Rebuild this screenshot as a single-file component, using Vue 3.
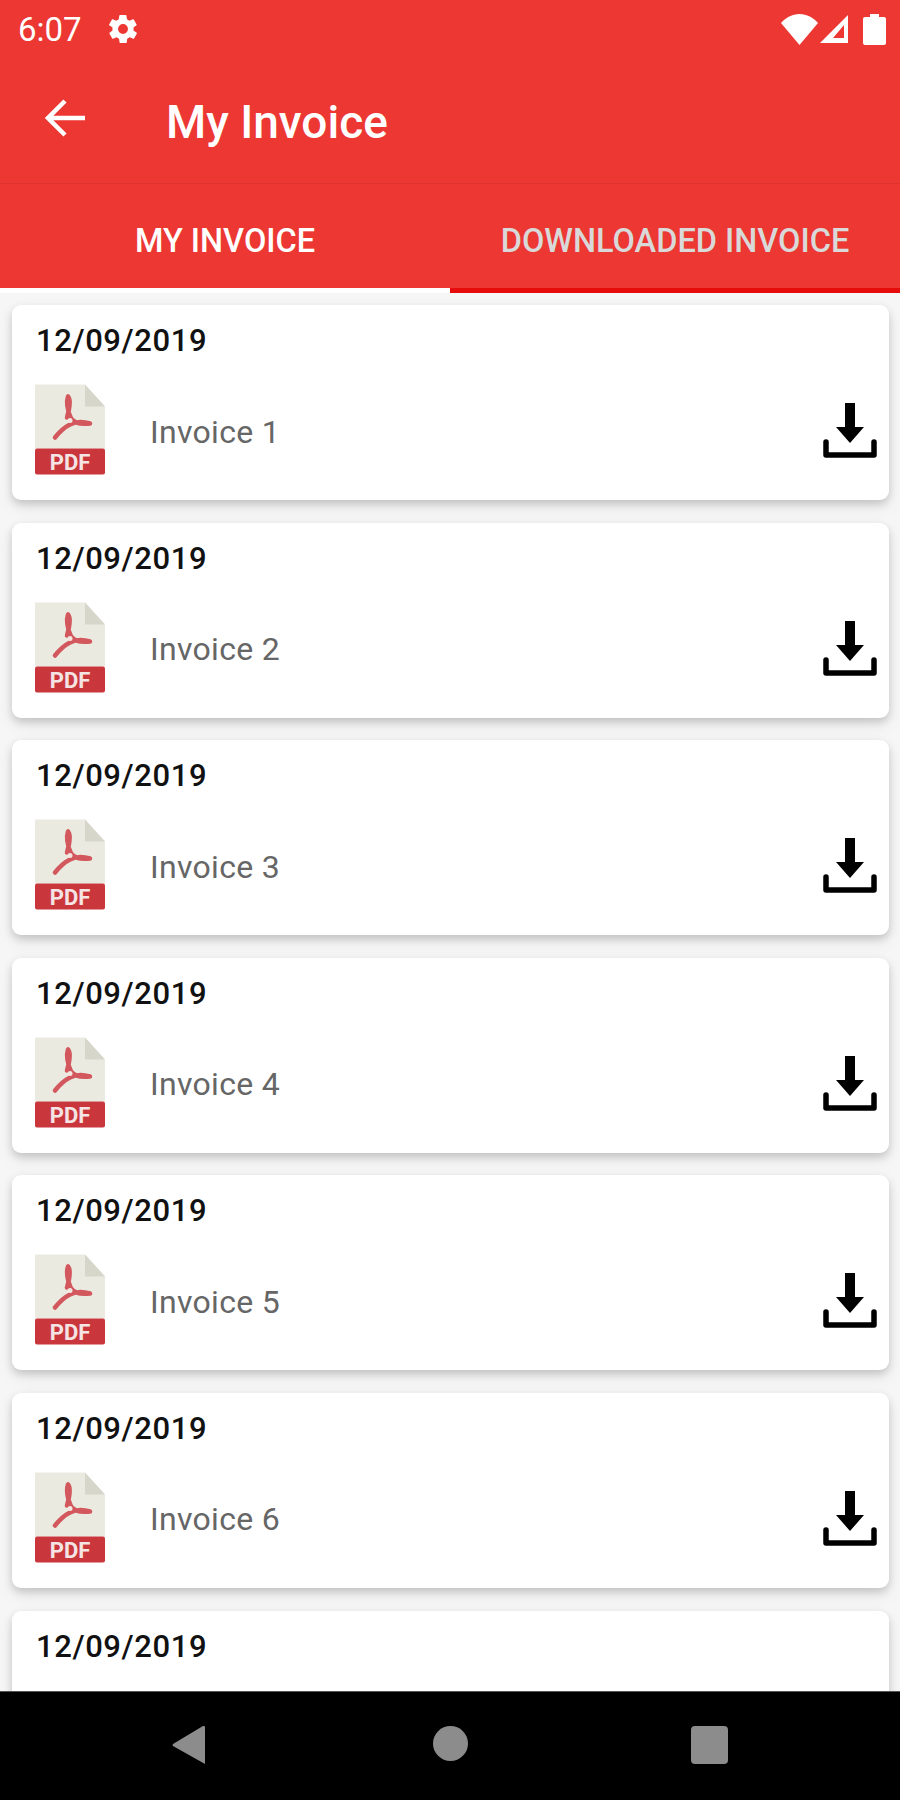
<script setup>
const invoices = [1, 2, 3, 4, 5, 6, 7].map(n => ({ id: n, date: '12/09/2019', name: 'Invoice ' + n }))
// the last card sits under the nav bar, only its date shows
const lastId = invoices.length
</script>

<template>
  <div class="screen">
    <header class="appbar">
      <div class="status">
        <span class="time">6:07</span>
        <svg class="gear" viewBox="0 0 24 24"><path fill="#fff" fill-rule="evenodd" d="M19.4 13a7.5 7.5 0 0 0 0-2l2.100-1.600a.5.5 0 0 0 .1-.6l-2-3.500a.5.5 0 0 0-.6-.2l-2.500 1a7.300 7.300 0 0 0-1.700-1l-.4-2.600a.5.5 0 0 0-.5-.4h-4a.5.5 0 0 0-.5.4l-.4 2.600a7.300 7.300 0 0 0-1.700 1l-2.500-1a.5.5 0 0 0-.6.2l-2 3.500a.5.5 0 0 0 .1.6L4.600 11a7.500 7.500 0 0 0 0 2l-2.100 1.600a.5.5 0 0 0-.1.6l2 3.500a.5.5 0 0 0 .6.2l2.500-1a7.300 7.300 0 0 0 1.700 1l.4 2.600a.5.5 0 0 0 .5.4h4a.5.5 0 0 0 .5-.4l.4-2.600a7.300 7.300 0 0 0 1.700-1l2.500 1a.5.5 0 0 0 .6-.2l2-3.500a.5.5 0 0 0-.1-.6ZM12 15.500a3.500 3.500 0 1 1 0-7 3.500 3.500 0 0 1 0 7Z"/></svg>
        <span class="spacer"></span>
        <svg class="wifi" viewBox="0 0 37 31"><path fill="#fff" d="M18.500 31 0 9C5 3.500 11 0 18.500 0S32 3.500 37 9Z"/></svg>
        <svg class="signal" viewBox="0 0 29 29"><path fill="#fff" fill-rule="evenodd" d="M28 0v28H0ZM24 10 13 23h11Z"/></svg>
        <svg class="battery" viewBox="0 0 23 31"><path fill="#fff" d="M7 0h9v3h5a2 2 0 0 1 2 2v24a2 2 0 0 1-2 2H2a2 2 0 0 1-2-2V5a2 2 0 0 1 2-2h5Z"/></svg>
      </div>
      <div class="toolbar">
        <svg class="back" viewBox="0 0 40 38"><path fill="none" stroke="#fff" stroke-width="4.500" d="M40 19H4M20 2 3 19l17 17"/></svg>
        <h1 class="title">My Invoice</h1>
      </div>
      <nav class="tabs">
        <div class="tab active">MY INVOICE</div>
        <div class="tab">DOWNLOADED INVOICE</div>
      </nav>
    </header>

    <main class="list">
      <article v-for="item in invoices" :key="item.id" class="card">
        <div class="date">{{ item.date }}</div>
        <div v-if="item.id < lastId" class="row">
          <svg class="pdf" viewBox="0 0 70 90">
            <path fill="#ebeae1" d="M0 0h50l20 22v42H0Z"/>
            <path fill="#d6d6ca" d="M50 0l20 22H50Z"/>
            <path fill="none" stroke="#d2585e" stroke-width="4.500" stroke-linecap="round" stroke-linejoin="round" d="M33 12c-2 6 0 15 3 22 4 5 11 6 19 5-7-2-14-2-20 1-6 3-11 8-15 13M33 12c3 3 1 14-1 21"/>
            <circle cx="35" cy="36" r="2.500" fill="#f3e6e0"/>
            <rect y="64" width="70" height="26" rx="2" fill="#c9363c"/>
            <text x="35" y="85" text-anchor="middle" class="pdf-label">PDF</text>
          </svg>
          <span class="name">{{ item.name }}</span>
          <svg class="download" viewBox="0 0 54 55">
            <path fill="#000" d="M22 0h10v24h9L27 40 13 24h9Z"/>
            <path fill="none" stroke="#000" stroke-width="5.500" stroke-linecap="round" stroke-linejoin="round" d="M3 39v13h48V39"/>
          </svg>
        </div>
      </article>
    </main>

    <footer class="navbar">
      <svg class="nav-icon" width="33" height="38" viewBox="0 0 33 38"><path fill="#8c8c8c" d="M33 1v37L1 20a1.500 1.500 0 0 1 0-2L31 0a1.500 1.500 0 0 1 2 1Z"/></svg>
      <span class="nav-circle"></span>
      <span class="nav-square"></span>
    </footer>
  </div>
</template>

<style scoped>
.screen {
  width: 900px;
  height: 1800px;
  display: flex;
  flex-direction: column;
  overflow: hidden;
  background: #f6f6f6;
  font-family: Roboto, "Liberation Sans", sans-serif;
}
.appbar {
  background: #ec3733;
  color: #fff;
  flex: none;
}
.status {
  height: 58px;
  display: flex;
  align-items: center;
  padding: 0 14px 0 18px;
}
.time {
  font-size: 33px;
  width: 88px;
}
.gear {
  width: 34px;
  height: 34px;
}
.spacer {
  flex: 1;
}
.wifi {
  width: 37px;
  height: 31px;
}
.signal {
  width: 29px;
  height: 29px;
  margin-left: 2px;
}
.battery {
  width: 23px;
  height: 31px;
  margin-left: 14px;
}
.toolbar {
  height: 126px;
  display: flex;
  align-items: center;
  border-bottom: 1px solid #dd3431;
  padding-left: 45px;
  padding-bottom: 6px;
  box-sizing: border-box;
}
.back {
  width: 40px;
  height: 38px;
}
.title {
  margin: 8px 0 0 81px;
  font-size: 46px;
  font-weight: 500;
}
.tabs {
  display: flex;
}
.tab {
  flex: 1;
  height: 109px;
  display: flex;
  align-items: center;
  justify-content: center;
  font-size: 32.5px;
  font-weight: 500;
  color: #d9d9d9;
  border-bottom: 5px solid #e60c0c;
  padding-top: 9px;
  box-sizing: border-box;
}
.tab.active {
  color: #fff;
  border-bottom-color: #fff;
}
.list {
  flex: 1;
  min-height: 0;
  overflow: hidden;
  display: flex;
  flex-direction: column;
  gap: 22.6px;
  padding: 12px 11px 0 12px;
}
.card {
  flex: none;
  height: 195px;
  box-sizing: border-box;
  background: #fff;
  border-radius: 9px;
  box-shadow: 0 4px 8px rgba(0, 0, 0, 0.18), 0 8px 20px rgba(0, 0, 0, 0.05);
  padding: 17px 12px 0 23px;
}
.date {
  font-size: 31px;
  font-weight: 500;
  letter-spacing: 0.6px;
  margin-left: 1px;
  color: #111;
}
.row {
  display: flex;
  align-items: center;
  margin-top: 25px;
}
.pdf {
  width: 70px;
  height: 91px;
}
.pdf-label {
  font-family: Roboto, sans-serif;
  font-size: 22px;
  font-weight: 700;
  fill: #f5e4e4;
}
.name {
  flex: 1;
  margin: 4px 0 0 45px;
  font-size: 32px;
  letter-spacing: 0.3px;
  color: #666;
}
.download {
  width: 54px;
  height: 55px;
  margin-top: 2px;
}
.navbar {
  flex: none;
  height: 109px;
  background: #000;
  border-top: 1px solid #555;
  display: flex;
  align-items: flex-start;
  padding: 34px 0 0 172px;
  box-sizing: border-box;
}
.nav-circle {
  width: 35px;
  height: 35px;
  margin-left: 228px;
  border-radius: 50%;
  background: #8c8c8c;
}
.nav-square {
  width: 37px;
  height: 38px;
  margin-left: 223px;
  border-radius: 4px;
  background: #8c8c8c;
}
</style>
